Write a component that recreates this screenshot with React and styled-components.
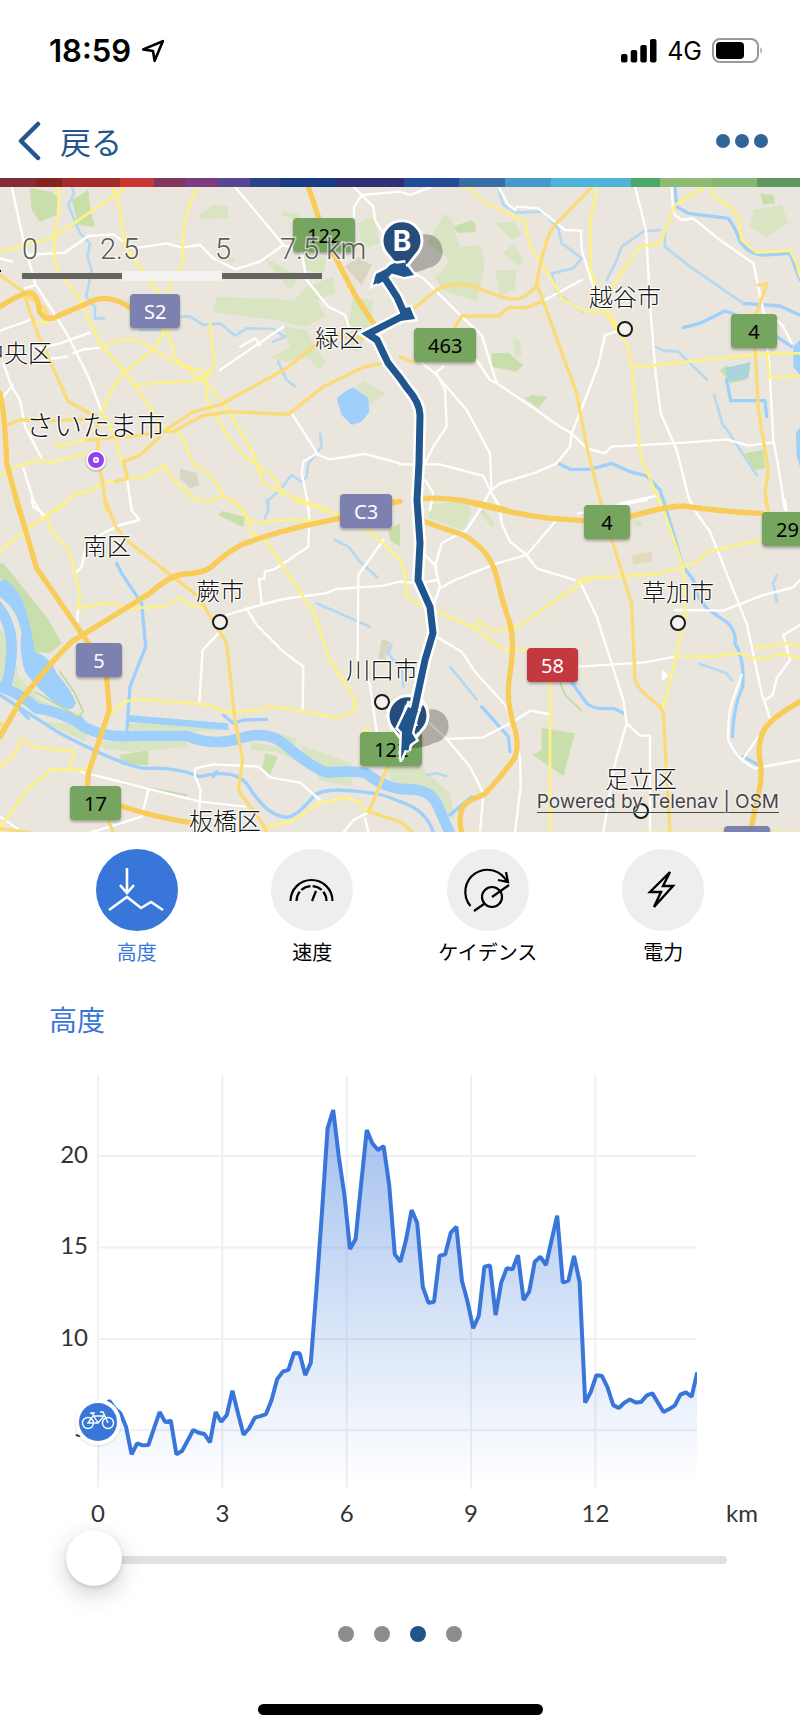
import React, { useState } from 'react'
import styled, { createGlobalStyle } from 'styled-components'

const GlobalStyle = createGlobalStyle`
	* {
		box-sizing: border-box;
	}
	body {
		margin: 0;
		background: #fff;
		font-family: 'Inter', 'Noto Sans CJK JP', sans-serif;
		color: #000;
	}
	button {
		border: 0;
		padding: 0;
		background: none;
		font: inherit;
		cursor: pointer;
	}
`

const Screen = styled.main`
	display: flex;
	flex-direction: column;
	overflow: hidden;
`

/* ---------- status bar ---------- */

const StatusBar = styled.div`
	display: flex;
	align-items: center;
	justify-content: space-between;
	height: 102px;
	padding: 0 36px 0 49px;
`

const StatusGroup = styled.div`
	display: flex;
	align-items: center;
	gap: 10px;
`

const Clock = styled.span`
	font-size: 31px;
	font-weight: 600;
	line-height: 36px;
`

const Carrier = styled.span`
	font-size: 25px;
	line-height: 32px;
`

/* ---------- navigation ---------- */

const NavBar = styled.nav`
	display: flex;
	align-items: center;
	justify-content: space-between;
	height: 76px;
	padding: 2px 32px 0 17px;
`

const BackLink = styled.a`
	display: flex;
	align-items: center;
	gap: 19px;
	color: #23568e;
	font-family: 'Noto Sans CJK JP', sans-serif;
	font-size: 31px;
	font-weight: 400;
	line-height: 40px;
	text-decoration: none;
`

const MoreButton = styled.button`
	display: flex;
	gap: 5px;
	span {
		width: 14px;
		height: 14px;
		border-radius: 50%;
		background: #306597;
	}
`

const Rainbow = styled.svg`
	display: block;
	width: 100%;
	height: 9px;
`

/* ---------- map ---------- */

const MapArea = styled.section`
	position: relative;
	height: 645px;
	overflow: hidden;
	background: #eae6dd;
`

const MapLayer = styled.svg`
	position: absolute;
	inset: 0;
	width: 100%;
	height: 100%;
`

const shieldColors = {
	green: ['#76a560', '#000'],
	purple: ['#7d81b0', '#fff'],
	red: ['#c3393f', '#fff'],
}

const Shield = styled.span`
	position: absolute;
	left: ${p => p.$x / 8}%;
	top: ${p => p.$y}px;
	min-width: 46px;
	height: 34px;
	padding: 0 14px;
	border-radius: 4px;
	background: ${p => shieldColors[p.$kind][0]};
	color: ${p => shieldColors[p.$kind][1]};
	box-shadow: 0 2px 3px rgba(0, 0, 0, 0.3);
	font-family: 'Noto Sans', sans-serif;
	font-size: 20px;
	line-height: 36px;
	text-align: center;
`

const Place = styled.span`
	position: absolute;
	left: ${p => p.$x / 8}%;
	top: ${p => p.$y}px;
	color: #111;
	font-family: 'Noto Sans CJK JP', sans-serif;
	font-size: ${p => (p.$big ? 28 : 24)}px;
	font-weight: 300;
	line-height: 30px;
	white-space: nowrap;
	text-shadow: 1px 1px 1px #fff, -1px -1px 1px #fff, 1px -1px 1px #fff, -1px 1px 1px #fff;
`

const ScaleText = styled.text`
	font-family: 'Roboto', sans-serif;
	font-size: 29px;
	font-weight: 300;
	fill: #5c5b58;
	stroke: rgba(255, 255, 255, 0.55);
	stroke-width: 3px;
	paint-order: stroke;
`

const PinText = styled.text`
	font-family: 'Inter', sans-serif;
	font-size: 28px;
	font-weight: 700;
	fill: #fff;
	text-anchor: middle;
`

const Attribution = styled.a`
	position: absolute;
	right: 21px;
	bottom: 19px;
	color: #45454a;
	font-family: 'Inter', sans-serif;
	font-size: 19px;
	line-height: 20px;
	text-decoration: none;
	border-bottom: 1px solid #45454a;
	text-shadow: 0 0 2px #fff, 0 0 2px #fff;
`

/* ---------- metric switcher ---------- */

const Metrics = styled.div`
	display: grid;
	grid-template-columns: repeat(4, 1fr);
	padding: 17px 49px 0;
`

const MetricIcon = styled.span`
	display: block;
	width: 82px;
	height: 82px;
	border-radius: 50%;
	background: ${p => (p.$active ? '#3876da' : '#eee')};
	color: ${p => (p.$active ? '#fff' : '#000')};
`

const MetricButton = styled.button`
	display: flex;
	flex-direction: column;
	align-items: center;
	gap: 7px;
	color: ${p => (p.$active ? '#3876da' : '#000')};
	font-family: 'Noto Sans CJK JP', sans-serif;
	font-size: 20px;
	font-weight: 400;
	line-height: 28px;
`

/* ---------- chart ---------- */

const ChartTitle = styled.h2`
	margin: 33px 49px 21px;
	color: #3876da;
	font-family: 'Noto Sans CJK JP', sans-serif;
	font-size: 28px;
	font-weight: 400;
	line-height: 40px;
`

const ChartSvg = styled.svg`
	display: block;
	width: 100%;
`

const AxisText = styled.text`
	font-family: 'Lato', sans-serif;
	font-size: 24px;
	fill: #333;
	text-anchor: ${p => p.$anchor || 'middle'};
`

const Slider = styled.input`
	appearance: none;
	display: block;
	height: 60px;
	margin: 0 73px 0 66px;
	background: none;
	&::-webkit-slider-runnable-track {
		height: 8px;
		border-radius: 4px;
		background: #e2e2e4;
	}
	&::-webkit-slider-thumb {
		appearance: none;
		width: 56px;
		height: 56px;
		margin-top: -26px;
		border-radius: 50%;
		background: #fff;
		box-shadow: 0 2px 4px rgba(0, 0, 0, 0.12), 0 8px 24px rgba(0, 0, 0, 0.18);
	}
`

const Pager = styled.div`
	display: flex;
	justify-content: center;
	gap: 20px;
	margin-top: 36px;
`

const PagerDot = styled.button`
	width: 16px;
	height: 16px;
	border-radius: 50%;
	background: ${p => (p.$active ? '#20558c' : '#8c8c8c')};
`

const HomeIndicator = styled.div`
	align-self: center;
	width: 285px;
	height: 11px;
	margin: 62px 0 16px;
	border-radius: 6px;
	background: #000;
`

/* ---------- map data ---------- */

const strips = [
	[0, '#842c38'], [36, '#84241f'], [62, '#a32b29'], [120, '#cb3532'], [154, '#81365f'],
	[186, '#7d3c82'], [218, '#564795'], [250, '#2a4089'], [280, '#173b81'], [337, '#302f72'],
	[404, '#224c96'], [459, '#3a6ca6'], [505, '#469acb'], [551, '#4eb3d8'], [631, '#4aa868'],
	[660, '#8fba72'], [711, '#84b870'], [757, '#5f9862'],
]

const fills = {
	park: '#c8dfac',
	wood: '#d8e4c2',
	bare: '#d9d5c3',
	sand: '#e3dabe',
	lake: '#9ed0fb',
	pond: '#a9d4dc',
}

const lines = {
	river: ['#9ed0fb', 32],
	canal: ['#9ed0fb', 10],
	stream: ['#b5d9f1', 8],
	path: ['#bcd9a4', 5],
	street: ['#fff', 7],
	minor: ['#fdf283', 8],
	major: ['#fadb78', 10],
	highway: ['#f8cc58', 16],
}

// every tile is 400 units wide and drawn at three times its size
const tiles = [
	{
		x: 0,
		y: -7,
		park: 'M90 25L155 35 172 50 170 105 120 125 95 90ZM215 60L265 30 270 80 285 140 235 135Z',
		wood:
			'M595 105L640 75 685 80 685 115 600 118ZM845 92L900 105 890 120 850 108ZM650 350L880 360 920 320 1000 290 1005 340 950 360 975 410 915 440 830 420 700 405 640 395ZM790 230L900 290 870 330ZM850 440L920 450 940 490 975 545 960 570 920 530 860 545 810 535 870 500ZM1060 350L1120 360 1110 440 1075 515 1030 505 1040 460ZM1075 130L1120 110 1140 190 1085 210ZM910 220L980 235 970 280 915 270ZM1090 603L1155 640 1110 675 1070 620ZM640 235L705 235 700 248 640 240Z',
		bare: 'M1035 260L1075 230 1115 255 1085 315ZM540 865L590 880 598 915 570 925 540 895Z',
		lake: 'M1010 655Q1030 635 1060 622L1105 655 1108 695 1085 725 1055 735 1025 705Z',
		stream:
			'M215 20L222 40 205 75 240 160 270 190 262 230 275 270 265 320 258 350 285 380 285 415 312 415M420 450H480M545 410H570L610 435 660 430 705 467 740 445 820 447 855 470 820 485M835 545L860 600 885 620M960 760L965 800 925 850 920 890 905 905 875 885 840 930 805 960 805 995',
		street:
			'M35 20L70 180 105 310 200 460 265 590 305 695M0 235L35 245M75 225L195 218 265 168 340 163 400 205 500 190 545 203 600 195 640 235 705 268 780 245 850 195 780 110 705 20M850 195L905 215 920 300 985 380 1035 405 1050 450M1060 20L1085 45 1200 35M1085 45L1062 80V110M1085 45L1120 80 1125 120 1150 160M0 452L90 420M95 510L180 490 270 458M130 540L200 530M220 520L250 508 300 503M10 550L35 620 60 660 75 740 125 835M10 650L38 615M70 865L100 960 130 1010M720 500L765 475 780 495M660 570L850 440M875 700L955 825 990 838 1095 822 1200 850M950 820L910 845 905 880 928 990M380 890L395 990M75 325L105 315',
		minor:
			'M0 215L155 175 375 25M175 20L178 90 160 180 168 260 240 360 300 490 370 570 490 740 540 760 580 850 630 885 670 945 730 990M335 20L355 60 375 200 480 345 500 400V450L530 540 640 630 690 700 760 820 790 910 850 940 980 990M590 20L560 100 548 170 550 250 520 290 500 340M100 430L145 425M300 500L360 480 410 478 520 545 625 580 600 600 400 615M495 450L460 510 375 575 340 620 305 695 345 770 380 890M630 430L643 545 620 600 622 660 690 780 735 830 820 890 850 940M165 800L260 780M0 885L50 860 125 838 145 848 260 820M170 990L225 940 270 935 310 908 355 905 410 890 425 895 493 858 520 900 585 960 625 965 670 945',
		major:
			'M0 285L70 335 110 455 205 665 290 710 295 830 320 990M20 735L60 720 180 722 280 715M260 780L400 768 490 755 580 695 660 675 860 565 940 500 1000 465 1100 475M490 755H520L605 708 690 695 865 703 970 620 1090 562 1145 550M480 770L420 825 370 845 382 895 345 905M75 345L130 380 150 415',
		highway:
			'M0 380Q80 330 95 340 115 350 118 395 140 430 180 405L290 358Q340 345 400 390M0 640Q15 700 20 850L60 1000M925 20L955 110M1000 220L1065 345 1120 430',
	},
	{
		x: 400,
		y: -7,
		park:
			'M160 140L215 120 228 135 225 155 175 160ZM275 520L325 518 370 555 350 575 275 560ZM375 655L395 645 443 650 415 685ZM1080 40L1120 45 1125 70 1090 75ZM1035 820L1090 810 1095 865 1060 870ZM960 570L980 555 1040 600 990 610Z',
		wood:
			'M80 190L135 100 155 120 180 200 240 195 255 250 230 365 130 330 105 295 150 240ZM285 130L345 125 365 165 335 180ZM310 220L340 190 370 240 360 260ZM285 270L350 270 345 330 300 345ZM340 470L360 485 365 530 345 530ZM1060 90L1145 75 1165 130 1100 170 1050 140ZM90 975L180 965 195 1040 90 1010Z',
		pond: 'M975 565L1052 545 1045 595 985 605Z',
		lake: 'M1210 470L1180 500 1180 560 1210 600ZM1210 725L1188 760 1190 830 1210 890Z',
		stream:
			'M295 25L310 75 350 98 430 95 475 145 485 190Q520 215 545 235L520 265 455 280 470 340 550 395M780 150L730 155 665 200 650 240 620 300M795 150V200L870 260 1030 370M765 500L790 512 835 515 920 598M942 645L970 740M975 740L1070 885',
		canal:
			'M825 20L830 80 865 100 985 115Q1010 150 1020 185 1050 225 1090 225L1170 220 1200 300M850 443L900 430 975 393 1010 405M1030 370L1140 378 1200 405M475 850L510 868H570L635 850 690 875 740 888 780 930 795 980M1130 470L1175 500M980 600L992 662H1095L1100 710',
		street:
			'M0 35L30 45 90 22M295 20L325 75 345 90 350 80 415 85 495 150 543 152 545 210 580 320M705 20L738 150 752 400 768 590 782 700 830 810 865 950 880 990M815 20L820 100 845 120 880 115 960 180 1060 250 1075 320 1090 390 1108 560 1120 780 1135 860 1155 990M425 365L545 300M10 260L70 295 185 410 245 465 290 610 410 690Q460 730 515 760L560 805 615 820 635 800 855 788 980 778 1045 797 1120 787M230 540L270 600 290 610M650 455L615 465 595 555 555 660 515 760 510 800 470 850 400 880 300 910 270 935 240 990M60 545L105 580 200 690 270 820 275 940 300 980M110 580L135 630 140 740 100 800 75 850M0 853H120L250 888 275 940M75 900L100 940 90 990M1130 420L1150 440 1175 490M660 970L770 948M130 560L105 580',
		minor:
			'M185 20L210 25 250 65 375 125 390 200 450 290 485 355 550 392 610 395 680 490 695 560 722 830 785 980M590 20L572 120V270L600 350 670 470M915 20L825 75 780 190 720 200 670 270 620 350M935 20L940 50 985 75 1015 110 1025 180 1070 218 1170 212 1190 250 1200 290M695 563L1100 520H1200M1100 520L1108 592 1200 588',
		major:
			'M575 22L460 140Q430 190 410 310L530 640 560 800 605 975M38 388L110 330Q170 300 230 322 330 370 370 352L410 320M165 440L185 408H295L325 383H380L425 365M1075 315L1100 312 1070 400M1065 500L1075 690 1105 870 1095 940 1105 990M0 530L40 547',
		highway: 'M-70 968L-20 965M75 955Q170 950 320 990',
	},
	{
		x: 0,
		y: 313,
		park:
			'M0 190L10 190 140 350 185 430 150 460 105 455 75 330 40 260 0 235ZM360 765L445 750V795H365ZM795 760L833 770 810 825 788 805ZM655 45L665 33 735 50 730 82ZM1165 90L1200 70V140L1170 120Z',
		wood:
			'M0 390L20 400 25 450 15 550 0 550ZM50 490L55 530 120 600 240 650 230 665 100 620 40 560ZM130 665L200 670 265 700 255 725ZM300 725H560V740L400 755 310 745ZM385 670L680 668 690 690 560 695 385 690ZM750 725L850 745 900 790 830 755 755 750ZM830 700L890 715 880 740ZM900 735L1055 790V860L960 840ZM1165 800L1260 800 1350 880 1365 960 1300 900 1170 840Z',
		bare: 'M1145 418L1172 425 1155 480 1135 475Z',
		lake:
			'M-10 245L15 238Q60 270 75 320 95 390 105 455 150 470 170 520 215 570 228 610 215 640 185 620 120 580 75 515 55 450 65 400 50 320 -10 285Z',
		river:
			'M-10 315Q45 380 33 480 30 520 20 555M0 560Q60 580 110 625 200 640 250 680 320 715 400 708H560Q640 740 720 715 800 690 850 730 930 800 980 818 1060 810 1100 820 1160 870 1230 868 1290 870 1310 910L1350 1000',
		canal:
			'M0 585Q100 650 180 700 350 790 430 805 530 800 600 830 700 805 740 850 800 950 860 952 890 950 940 890 970 860 1080 875 1150 880 1200 905 1280 930 1300 998M385 650L680 675M385 660L680 685M350 190L365 220 425 310 437 440 390 560 380 700M670 645L700 670 730 660 800 658M640 830L650 815M240 650L255 670M50 620L85 655',
		stream: 'M1005 120L1045 140 1080 185 1132 232M950 310L1110 380M1175 435L1165 460 1180 480 1205 495 1210 560M800 0L805 30 795 55',
		path: 'M180 515L225 580 250 635 235 650 105 575M370 850L560 885',
		street:
			'M95 0L100 20 140 50M390 0L395 30 418 60 360 75 290 110 255 150 245 200 225 220M235 320L232 365M920 0L928 50 925 140 825 207 795 215 793 235 777 237 785 308M680 345L745 325 850 297 975 280 1010 267 1150 257 1200 245M1150 120L1075 225 1073 480M1100 530L1110 555 1130 695M740 325L770 375 850 455 910 500 908 625M655 400L608 450 598 605M240 815L440 865 600 905 735 920M445 870L425 950 330 980 270 998M585 830V805L640 793 775 800 810 832 900 848 960 900M585 830L602 870 598 930M0 950L70 998M1030 998L1060 960 1110 935M1095 955L1105 995',
		minor:
			'M0 152L70 95 205 0M140 50L155 95 210 155 240 280 235 325 320 308 385 325 490 320 543 292 560 312 610 325M335 640L370 607 410 597 630 615 670 637 790 630 805 618 890 630 1015 655 1065 630V600L990 480 945 345 800 125 755 100 740 50 700 0M745 60L780 70 860 58 945 62M885 0L1020 45M1100 85L1160 140 1200 180M0 800L40 770 65 717 100 740 222 755 210 810M0 998L10 970 80 870 155 808 240 812 265 800M790 985L880 962 950 912 1040 893 1075 905 1100 935M1090 685L1110 695',
		major:
			'M315 0L350 85 385 125 595 290 680 430 705 660 728 780 715 870 790 975 800 998M1165 795L1130 880 1105 935 1200 965 1240 998M325 960L340 998M0 985L90 998M0 670L20 680',
		highway:
			'M50 0L110 205 265 430M0 710L60 605Q140 500 215 425L450 280Q510 225 555 222 610 220 635 200 700 140 750 125 860 85 1020 55M1170 10L1200 4M320 530L328 630 265 820 262 860M362 918Q460 950 570 968',
	},
	{
		x: 400,
		y: 313,
		park: 'M425 685L525 700 490 828 398 765 425 750Z',
		wood: 'M90 15L200 0 215 40 190 90 85 55ZM235 30L250 28 285 70 275 85ZM700 60L730 65 720 80 700 75Z',
		sand: 'M695 165L755 155V185L700 195Z',
		canal:
			'M790 0L850 200 880 240 895 290 920 325 985 370Q1010 400 1005 430 1035 480 1028 560 1000 620 997 710M510 540L560 610Q580 630 640 625L672 640M245 620L325 710 330 755M1030 770L1075 795M150 945L215 890',
		stream: 'M150 500L230 598M900 492L980 520 995 540M1130 225L1120 250 1130 305M80 825L110 820 138 828',
		path: 'M480 548L495 585 545 632',
		street:
			'M285 0L300 25 305 70 330 125 380 165 410 205 540 245 590 350 670 600 680 670 720 707H750V998M465 65L380 165 290 190 165 240 120 265M255 5L200 90 125 130 105 200 120 260 100 320 110 410 185 455 225 515 320 620 360 770 362 860 345 998M60 150L110 200M0 245L60 250 110 240M680 670L645 790 610 998M535 500L735 487 825 470M865 -10L890 40 930 95 1040 370 1085 580 1110 655M825 330L970 332 1085 287 1180 262 1200 240M1200 375L1150 405 1170 480 1130 535 1118 585 1095 600M1025 525L1005 580Q980 640 985 720 1010 780 1065 805L1200 780M1030 775L1075 710M90 670L140 717 250 712 340 665 390 632 445 642M140 717L210 800 250 880 240 998M535 40L740 0M1155 0L1160 30M790 515L800 528 788 537Z',
		minor:
			'M450 540V998M115 335L225 385 310 450H380M225 380L240 363 260 385 290 393 360 375 520 265 580 232 770 223 890 188 920 157 1085 118M530 243L580 232M780 0L850 200 855 350 830 460 790 625M825 468L940 470 1010 458 1085 480 1140 460 1200 475M1065 445L1155 430 1200 437M0 175L15 220 20 290 60 315M180 998H240M740 998H1200',
		major: 'M600 0L605 15M635 118L695 310 705 540Q715 570 780 620L790 640 810 998M1095 0L1105 30',
		highway:
			'M75 65Q130 85 190 105 270 150 290 230 305 300 330 370 345 430 330 520 315 600 345 690 360 750 340 780 270 870 250 885 190 905 185 930 175 960 185 998M200 5Q330 40 450 55L555 62M690 50Q790 20 850 18 960 35 1085 40M1200 605Q1120 650 1095 685 1070 730 1080 780 1090 840 1070 900L1055 978',
	},
]

const shields = [
	{ x: 293, y: 31, kind: 'green', text: '122' },
	{ x: 130, y: 107, kind: 'purple', text: 'S2' },
	{ x: 414, y: 141, kind: 'green', text: '463' },
	{ x: 731, y: 127, kind: 'green', text: '4' },
	{ x: 340, y: 307, kind: 'purple', text: 'C3' },
	{ x: 584, y: 318, kind: 'green', text: '4' },
	{ x: 762, y: 325, kind: 'green', text: '298' },
	{ x: 76, y: 456, kind: 'purple', text: '5' },
	{ x: 70, y: 599, kind: 'green', text: '17' },
	{ x: 527, y: 461, kind: 'red', text: '58' },
	{ x: 360, y: 545, kind: 'green', text: '122' },
	{ x: 724, y: 639, kind: 'purple', text: '' },
]

const places = [
	{ x: 315, y: 135, text: '緑区' },
	{ x: -20, y: 150, text: '中央区' },
	{ x: 26, y: 222, text: 'さいたま市', big: true },
	{ x: 83, y: 343, text: '南区' },
	{ x: 196, y: 388, text: '蕨市' },
	{ x: 346, y: 467, text: '川口市' },
	{ x: 589, y: 94, text: '越谷市' },
	{ x: 642, y: 389, text: '草加市' },
	{ x: 605, y: 576, text: '足立区' },
	{ x: 189, y: 618, text: '板橋区' },
]

const towns = [[625, 142], [220, 435], [382, 515], [678, 436], [641, 624]]

const route =
	'M406 79L392 81 384 90 376 94M384 90L397 110 405 128 368 147 377 153 388 176 400 191 407 201Q420 216 420 228L419 276 417 313 420 356 418 393 430 420 433 446 425 473 415 520 409 543 405 563'
const spurs =
	'M373 98L376 87 386 82 394 76 408 80 414 88 404 90 390 86 382 94ZM400 122L410 120 415 132 400 134ZM408 520L418 524 410 543 416 553 406 560 401 572 402 545 398 541Z'
const drift = 'M409 514L403 530M419 510L423 514 415 531M398 541L406 543M412 554L419 546M400 564L401 575'

/* ---------- chart data ---------- */

// metres above sea level, one sample every 135 m
const altitude = [
	5.47, 6.11, 6.62, 6.2, 5.93, 5.2, 3.69, 4.29, 4.18, 4.2, 5.11, 6, 5.45, 5.53, 3.69, 3.87, 4.43, 5.02,
	4.87, 4.8, 4.34, 6, 5.47, 5.84, 7.17, 5.93, 4.76, 5.11, 5.69, 5.78, 5.89, 6.66, 7.8, 8.21, 8.31, 9.23,
	9.21, 8.02, 8.7, 12.67, 16.95, 21.51, 22.51, 19.96, 17.87, 14.91, 15.46, 18.5, 21.42, 20.69, 20.33,
	20.54, 18.41, 14.62, 14.22, 15.4, 17.05, 16.35, 12.85, 11.98, 12.01, 14.55, 14.62, 15.81, 16.13, 13.16,
	12.03, 10.58, 11.27, 13.95, 14.02, 11.3, 13.07, 13.87, 13.8, 14.57, 12.12, 12.58, 14.22, 14.49, 14.04,
	15.4, 16.74, 13.07, 13.18, 14.53, 13.13, 6.51, 7.11, 8.02, 7.97, 7.33, 6.38, 6.22, 6.51, 6.69, 6.53,
	6.55, 6.91, 7.02, 6.51, 6, 6.16, 6.36, 6.95, 7.08, 6.84, 8.17,
]

const plot = { left: 98, right: 697, top: 15, bottom: 429 }
const kmToX = km => plot.left + km * 41.45
const altToY = m => 96 + (20 - m) * 18.29

const icons = {
	altitude: (
		<g strokeWidth='2.6'>
			<path d='M31 19V44M24 36L31 44 38 36' />
			<path d='M13 61L31 48 45 59 55 53 67 61' />
		</g>
	),
	speed: (
		<g strokeWidth='2.2'>
			<path d='M19.500 52A21 21 0 0 1 61.500 52' />
			<path d='M25.500 52A15 15 0 0 1 55.500 52' strokeDasharray='10 2.300' />
			<path d='M41 52L45 42' />
		</g>
	),
	cadence: (
		<g strokeWidth='2.2'>
			<path d='M23.500 57A22 22 0 1 1 60 33M59 23L61 33 51 31' />
			<circle cx='45' cy='48' r='10' />
			<path d='M62 36L45 48M37 55L27 62' />
		</g>
	),
	power: <path d='M48 23L28 43H39L32 58 51 37H41Z' strokeWidth='2.4' />,
}

const metrics = [
	{ id: 'altitude', label: '高度' },
	{ id: 'speed', label: '速度' },
	{ id: 'cadence', label: 'ケイデンス' },
	{ id: 'power', label: '電力' },
]

const Pin = ({ x, y, letter }) => (
	<g transform={`translate(${x} ${y})`}>
		<path d='M0 32L10 0A17 17 0 1 1 26 27Q14 33 0 32Z' fill='#000' opacity='0.25' />
		<path
			d='M0 34Q-6 23 -14 14A20 20 0 1 1 14 14Q6 23 0 34Z'
			fill='#264c7c'
			stroke='#fff'
			strokeWidth='3'
		/>
		<PinText y='10'>{letter}</PinText>
	</g>
)

const RideMap = () => (
	<MapArea>
		<MapLayer viewBox='0 0 800 645' preserveAspectRatio='none' aria-hidden='true'>
			{[...Object.keys(fills), ...Object.keys(lines)].map(kind =>
				tiles.filter(t => t[kind]).map(t => (
					<path
						key={kind + t.x + t.y}
						transform={`translate(${t.x} ${t.y}) scale(0.33333)`}
						d={t[kind]}
						fill={fills[kind] || 'none'}
						stroke={lines[kind] ? lines[kind][0] : 'none'}
						strokeWidth={lines[kind] ? lines[kind][1] : 0}
						strokeLinejoin='round'
						strokeLinecap='round'
					/>
				)),
			)}
			{towns.map(([x, y]) => (
				<circle key={x} cx={x} cy={y} r='7' fill='#f4f2ee' stroke='#1c1a18' strokeWidth='2' />
			))}
			<circle cx='96' cy='274' r='11' fill='#aaa' opacity='0.5' />
			<circle cx='96' cy='273' r='9' fill='#9440ee' stroke='#fff' strokeWidth='2' />
			<circle cx='96' cy='273' r='2' fill='none' stroke='#fff' strokeWidth='2' />
		</MapLayer>
		{places.map(p => (
			<Place key={p.text} $x={p.x} $y={p.y} $big={p.big}>
				{p.text}
			</Place>
		))}
		{shields.map(s => (
			<Shield key={s.x} $x={s.x} $y={s.y} $kind={s.kind}>
				{s.text}
			</Shield>
		))}
		<MapLayer viewBox='0 0 800 645' preserveAspectRatio='none'>
			<Pin x={402} y={54} letter='B' />
			<Pin x={408} y={529} letter='A' />
			<g fill='none'>
				<path d={route} stroke='#fff' strokeWidth='12' />
				<path d={spurs} stroke='#fff' strokeWidth='5' />
				<path d={drift} stroke='#fff' strokeWidth='3' />
				<path d={route} stroke='#21558d' strokeWidth='7' />
				<path d={spurs} fill='#21558d' />
			</g>
			<path d='M0 84H1' stroke='#000' strokeWidth='2' />
			<path d='M122 89H222' stroke='#f3f2ef' strokeWidth='10' />
			<path d='M22 89H122M222 89H322' stroke='#666461' strokeWidth='6' />
			<ScaleText x='22' y='72'>0</ScaleText>
			<ScaleText x='100' y='72'>2.5</ScaleText>
			<ScaleText x='215' y='72'>5</ScaleText>
			<ScaleText x='280' y='72'>7.5 km</ScaleText>
		</MapLayer>
		<Attribution href='#attribution'>Powered by Telenav | OSM</Attribution>
	</MapArea>
)

const AltitudeChart = () => {
	const points = altitude.map((m, i) => `${(plot.left + i * 5.6).toFixed(1)} ${altToY(m).toFixed(1)}`)
	const line = 'M' + points.join('L')

	return (
		<ChartSvg viewBox='0 0 800 470' role='img' aria-label='高度'>
			<defs>
				<linearGradient id='fade' gradientUnits='userSpaceOnUse' x1='0' y1='50' x2='0' y2='425'>
					<stop offset='0' stopColor='#3876da' stopOpacity='0.47' />
					<stop offset='0.5' stopColor='#3876da' stopOpacity='0.23' />
					<stop offset='1' stopColor='#3876da' stopOpacity='0' />
				</linearGradient>
				<clipPath id='plot'>
					<rect x={plot.left} y={plot.top} width={plot.right - plot.left} height='414' />
				</clipPath>
			</defs>
			<g stroke='#efeff4' strokeWidth='2'>
				{[0, 3, 6, 9, 12].map(km => (
					<path key={km} d={`M${kmToX(km)} ${plot.top}V${plot.bottom}`} />
				))}
				{[5, 10, 15, 20].map(m => (
					<path key={m} d={`M${plot.left} ${altToY(m)}H${plot.right}`} />
				))}
			</g>
			<g clipPath='url(#plot)'>
				<path d={`${line}V${plot.bottom}H${plot.left}Z`} fill='url(#fade)' />
				<path d={line} fill='none' stroke='#3876da' strokeWidth='4' strokeLinejoin='bevel' />
			</g>
			{[5, 10, 15, 20].map(m => (
				<AxisText key={m} x='88' y={altToY(m) + 7} $anchor='end'>
					{m}
				</AxisText>
			))}
			{[0, 3, 6, 9, 12].map(km => (
				<AxisText key={km} x={kmToX(km)} y='462'>
					{km}
				</AxisText>
			))}
			<AxisText x='742' y='462'>km</AxisText>
			<g transform='translate(98 362)'>
				<circle cy='1' r='24' fill='#000' opacity='0.06' />
				<circle r='23' fill='#fff' />
				<circle r='19' fill='#3876da' />
				<g fill='none' stroke='#fff' strokeWidth='1.4'>
					<circle cx='-10' cy='1' r='5.5' />
					<circle cx='10' cy='1' r='5.5' />
					<path d='M-10 1L-5 -6H6L0 1ZM0 1L-6 -9M-8 -9H-3M10 1L5 -10H2M-10 1H0' />
				</g>
			</g>
		</ChartSvg>
	)
}

export default () => {
	const [metric, setMetric] = useState('altitude')
	const [position, setPosition] = useState(0)

	return (
		<Screen>
			<GlobalStyle />
			<StatusBar>
				<StatusGroup>
					<Clock>18:59</Clock>
					<svg width='24' height='24' viewBox='0 0 22 22' aria-hidden='true'>
						<path
							d='M2 9.500L20 2 12.500 20 11 11Z'
							fill='none'
							stroke='#000'
							strokeWidth='2.4'
							strokeLinejoin='round'
						/>
					</svg>
				</StatusGroup>
				<StatusGroup>
					<svg width='36' height='24' viewBox='0 0 36 24' aria-hidden='true'>
						<rect y='15' width='6.500' height='8.500' rx='2' />
						<rect x='9.700' y='11' width='6.500' height='12.500' rx='2' />
						<rect x='19.300' y='6' width='6.500' height='17.500' rx='2' />
						<rect x='29' y='0' width='6.500' height='23.500' rx='2' />
					</svg>
					<Carrier>4G</Carrier>
					<svg width='52' height='26' viewBox='0 0 52 26' aria-hidden='true'>
						<rect x='1' y='1' width='45' height='23' rx='7' fill='none' stroke='#999' strokeWidth='2' />
						<rect x='4' y='4' width='28' height='17' rx='4' />
						<path d='M48.500 9Q51.500 12.500 48.500 16Z' fill='#999' />
					</svg>
				</StatusGroup>
			</StatusBar>
			<NavBar>
				<BackLink href='#back'>
					<svg width='24' height='40' viewBox='0 0 24 40' aria-hidden='true'>
						<path
							d='M21 3L4 20 21 37'
							fill='none'
							stroke='currentColor'
							strokeWidth='4.500'
							strokeLinecap='round'
							strokeLinejoin='round'
						/>
					</svg>
					戻る
				</BackLink>
				<MoreButton aria-label='メニュー'>
					<span />
					<span />
					<span />
				</MoreButton>
			</NavBar>
			<Rainbow viewBox='0 0 800 9' preserveAspectRatio='none' aria-hidden='true'>
				{strips.map(([x, color]) => (
					<path key={x} d={`M${x} 0H800V9H${x}Z`} fill={color} />
				))}
			</Rainbow>
			<RideMap />
			<Metrics>
				{metrics.map(m => (
					<MetricButton key={m.id} $active={m.id === metric} onClick={() => setMetric(m.id)}>
						<MetricIcon $active={m.id === metric}>
							<svg width='82' height='82' viewBox='0 0 82 82' fill='none' stroke='currentColor' aria-hidden='true'>
								{icons[m.id]}
							</svg>
						</MetricIcon>
						{m.label}
					</MetricButton>
				))}
			</Metrics>
			<ChartTitle>高度</ChartTitle>
			<AltitudeChart />
			<Slider
				type='range'
				min='0'
				max='100'
				value={position}
				aria-label='位置'
				onChange={e => setPosition(Number(e.target.value))}
			/>
			<Pager>
				{[0, 1, 2, 3].map(page => (
					<PagerDot key={page} $active={page === 2} aria-label={`ページ ${page + 1}`} />
				))}
			</Pager>
			<HomeIndicator />
		</Screen>
	)
}
